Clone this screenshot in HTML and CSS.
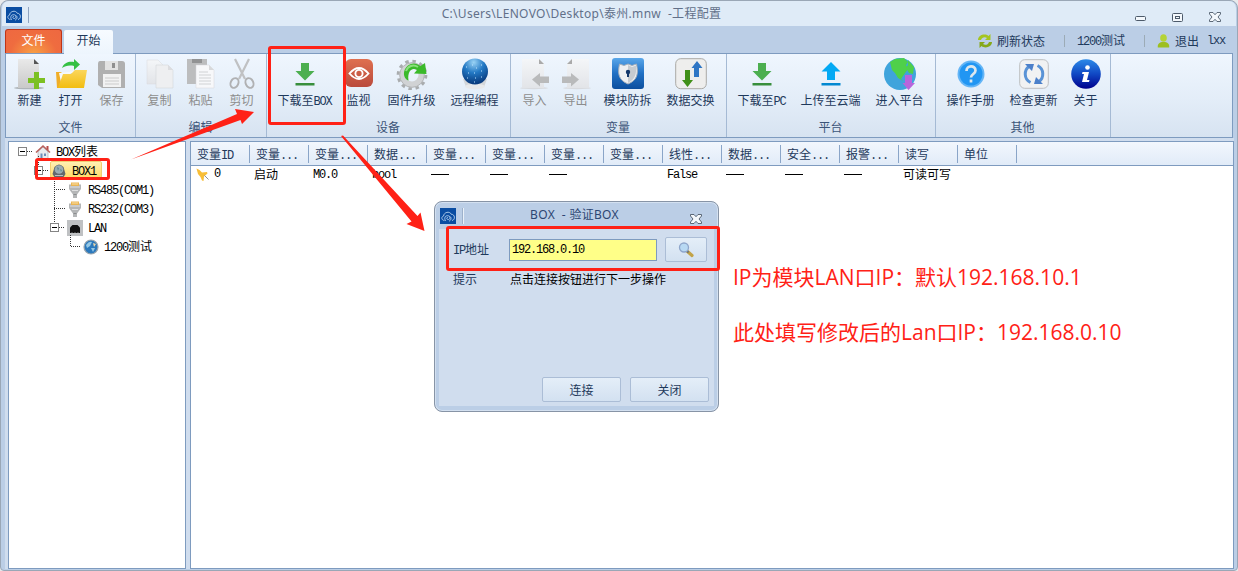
FILE: index.html
```html
<!DOCTYPE html>
<html lang="zh-CN">
<head>
  <meta charset="UTF-8">
  <title>工程配置</title>
  <meta name="viewport" content="width=device-width, initial-scale=1.0">
  <link rel="stylesheet" href="styles.css">
</head>
<body>
  <svg class="defs" width="0" height="0">
    <defs>
      <linearGradient id="gPage" x1="0" y1="0" x2="0" y2="1"><stop offset="0" stop-color="#e9e9e9"/><stop offset="1" stop-color="#c9c9c9"/></linearGradient>
      <linearGradient id="gPale" x1="0" y1="0" x2="0" y2="1"><stop offset="0" stop-color="#f4f6f8"/><stop offset="1" stop-color="#e2e4e8"/></linearGradient>
      <linearGradient id="gFolder" x1="0" y1="0" x2="0" y2="1"><stop offset="0" stop-color="#fbd65c"/><stop offset="1" stop-color="#f2bd10"/></linearGradient>
      <linearGradient id="gEye" x1="0" y1="0" x2="0" y2="1"><stop offset="0" stop-color="#df7050"/><stop offset="1" stop-color="#b94a3c"/></linearGradient>
      <linearGradient id="gShield" x1="0" y1="0" x2="0" y2="1"><stop offset="0" stop-color="#5aa7ea"/><stop offset=".5" stop-color="#2070c4"/><stop offset="1" stop-color="#0d4f9e"/></linearGradient>
      <linearGradient id="gInfo" x1="0" y1="0" x2="0" y2="1"><stop offset="0" stop-color="#2d8ae8"/><stop offset=".5" stop-color="#1048c4"/><stop offset="1" stop-color="#00008c"/></linearGradient>
      <radialGradient id="gGlobe" cx=".45" cy=".15" r=".8"><stop offset="0" stop-color="#9ad3f5"/><stop offset=".5" stop-color="#2278c4"/><stop offset="1" stop-color="#0a3d80"/></radialGradient>
      <symbol id="logo" viewBox="0 0 16 16">
        <rect width="16" height="16" fill="#0a4da2"/>
        <path d="M4.500 12.500C1.400 12.400.9 8.600 3.600 8c.2-3.800 6-5.300 7.700-1.700 3.700-.2 4.300 5.600.7 6.200M6 13c-2-1.500-1.600-5.300 1.600-5.300 2.600 0 3.200 3.300.9 3.800-2 .3-2.300-2.100-.6-2.200M9.500 8.300c2.200.7 2 4-.5 4.800" fill="none" stroke="#b9d2ee" stroke-width=".9"/>
      </symbol>
      <symbol id="closeX" viewBox="0 0 12 10">
        <path d="M.5.500h3.500L6 2.700 8 .5h3.500V2L9 5l2.500 3v1.500H8L6 7.300 4 9.500H.5V8L3 5 .5 2z" fill="#f4f8fc" stroke="#4d5a6a" stroke-width=".9"/>
      </symbol>
      <symbol id="down" viewBox="0 0 32 32">
        <path d="M12 5h8v8h5.500L16 22.500 6.500 13H12z" fill="#4caf50"/><rect x="6.500" y="25" width="19" height="2.500" fill="#388e3c"/>
      </symbol>
      <symbol id="serial" viewBox="0 0 16 16">
        <path d="M2 2.500h12V7l-2.500 3.500-1.500 2V16H6v-3.500l-1.500-2L2 7z" fill="#b4b6b7"/><path d="M4 .5h8V4H4z" fill="#e9b556"/><path d="M6 1v2M8 1v2M10 1v2" stroke="#fbe0a4"/><path d="M3 5h10M5 8.500h6" stroke="#dfe0e1"/><path d="M6.500 12.500h3" stroke="#8b8d8f"/>
      </symbol>
    </defs>
  </svg>

  <div class="window">
    <header class="titlebar">
      <svg class="logo"><use href="#logo"/></svg>
      <i class="grip"></i>
      <div class="title">C:\Users\LENOVO\Desktop\泰州.mnw&nbsp; -工程配置</div>
      <div class="controls">
        <svg width="11" height="6" viewBox="0 0 11 6"><rect x=".5" y=".5" width="10" height="4" rx="1" fill="#f4f8fc" stroke="#4d5a6a"/></svg>
        <svg width="11" height="9" viewBox="0 0 11 9"><rect x=".5" y=".5" width="10" height="8" rx="1" fill="#f4f8fc" stroke="#4d5a6a"/><rect x="3.500" y="3.500" width="4" height="2" fill="none" stroke="#4d5a6a"/></svg>
        <svg width="12" height="10"><use href="#closeX"/></svg>
      </div>
    </header>

    <nav class="tabs">
      <div class="tab file">文件</div>
      <div class="tab active">开始</div>
      <div class="account">
        <svg width="16" height="16" viewBox="0 0 16 16"><path d="M1 7C1 2 8 0 11.500 3L13.500 1v6H8l2-2C8 3.500 5 4 4 7z" fill="#a5c520"/><path d="M15 9c0 5-7 7-10.500 4L2.500 15V9H8l-2 2c2 1.500 5 1 6-2z" fill="#86a818"/></svg>
        <span class="refresh">刷新状态</span>
        <i class="sep"></i>
        <span class="station"><b class="en">1200</b>测试</span>
        <i class="sep"></i>
        <svg class="user" width="13" height="14" viewBox="0 0 13 14"><ellipse cx="6.500" cy="4" rx="3.300" ry="3.800" fill="#b5d336"/><path d="M.8 13.500c-.5-4 2-5 4-5.500h3.400c2 .5 4.500 1.500 4 5.500z" fill="#9dbf20"/></svg>
        <span class="logout">退出</span><span class="en">lxx</span>
      </div>
    </nav>

    <section class="ribbon">
      <div class="group">
        <div class="tools">
          <div class="tool w2">
            <svg viewBox="0 0 32 32"><ellipse cx="15" cy="30" rx="15" ry="1.300" fill="#aeb4b8"/><path d="M4 1h16l5 5v24H4z" fill="url(#gPage)"/><path d="M20 1v5h5z" fill="#555"/><path d="M20 14h5v6h6v5h-6v6h-5v-6h-6v-5h6z" fill="#7cc022"/></svg>
            <span>新建</span>
          </div>
          <div class="tool w2">
            <svg viewBox="0 0 32 32"><path d="M1 14h5l2 2h17v14H2z" fill="#f0ad27"/><path d="M4 15l18-2 1 9-16 7z" fill="#f6f9fb"/><path d="M8 18l3-1M13 17l4-1" stroke="#75aac5"/><path d="M3 30l5-14h8l4-4h12l-3 18z" fill="url(#gFolder)"/><path d="M7 10c2-6 8-7 12-6V1l6 5.500-6 5.500V8C14 7 10 8 7 10z" fill="#35c044"/></svg>
            <span>打开</span>
          </div>
          <div class="tool w2 off">
            <svg viewBox="0 0 32 32"><path d="M4 3h22q3 0 3 3v24H6l-4-3V6q0-3 2-3z" fill="#b0b0b0"/><path d="M9 3h13v9H9z" fill="#e2e2e2"/><path d="M16 5h3v5h-3z" fill="#8f8f8f"/><path d="M7 16h18v13H7z" fill="#f2f2f2"/><path d="M9 20h14M9 23h14M9 26h14" stroke="#ccc"/></svg>
            <span>保存</span>
          </div>
        </div>
        <div class="caption">文件</div>
      </div>

      <div class="group">
        <div class="tools">
          <div class="tool w2 off">
            <svg viewBox="0 0 32 32"><path d="M3 2h11l5 5v19H3z" fill="url(#gPale)" stroke="#d9dbde" stroke-width=".5"/><path d="M12 7h12l5 5v18H12z" fill="#eeeff1" stroke="#cfd1d4" stroke-width=".5"/><path d="M24 7v5h5z" fill="#dcdde0"/></svg>
            <span>复制</span>
          </div>
          <div class="tool w2 off">
            <svg viewBox="0 0 32 32"><path d="M2 1h20v25H2z" fill="#bcbdbe"/><path d="M7 1h10v4H7z" fill="#929394"/><path d="M11 7h13l5 5v18H11z" fill="#f7f8fa" stroke="#d4d6d8" stroke-width=".5"/><path d="M24 7v5h5z" fill="#d8d9db"/><path d="M14 14h9M14 17h12M14 20h12M14 23h12M14 26h12" stroke="#d0d2d4"/></svg>
            <span>粘贴</span>
          </div>
          <div class="tool w2 off">
            <svg viewBox="0 0 32 32"><path d="M9 1l10 20M23 1L13 21" stroke="#c0c1c3" stroke-width="2.200"/><ellipse cx="8.500" cy="25" rx="3.800" ry="5" transform="rotate(25 8.500 25)" fill="none" stroke="#b0b1b3" stroke-width="2"/><ellipse cx="23.500" cy="25" rx="3.800" ry="5" transform="rotate(-25 23.500 25)" fill="none" stroke="#b0b1b3" stroke-width="2"/></svg>
            <span>剪切</span>
          </div>
        </div>
        <div class="caption">编辑</div>
      </div>

      <div class="group">
        <div class="tools">
          <div class="tool wbox">
            <svg><use href="#down"/></svg>
            <span>下载至<b class="en">BOX</b></span>
          </div>
          <div class="tool w2">
            <svg viewBox="0 0 32 32"><rect x="2" y="1" width="28" height="28" rx="6" fill="url(#gEye)"/><path d="M6.500 15.500Q16 4.500 25.500 15.500 16 26.500 6.500 15.500z" fill="none" stroke="#fff" stroke-width="1.900"/><circle cx="16" cy="15.500" r="3.600" fill="none" stroke="#fff" stroke-width="1.900"/></svg>
            <span>监视</span>
          </div>
          <div class="tool w4">
            <svg viewBox="0 0 32 32"><circle cx="16" cy="17" r="13.600" fill="none" stroke="#a9acae" stroke-width="3.500" stroke-dasharray="3.400 3.721"/><circle cx="16" cy="17" r="9.500" fill="none" stroke="#d0d2d4" stroke-width="6"/><circle cx="16" cy="17" r="12.300" fill="none" stroke="#b4b6b8"/><path d="M12.500 22.500C5 20 7 6 18 5.500q3.500 0 6.500 2.500l4.500-3 1.500 11-12.500-.5 3-3.500c-4-3-10 0-8.500 10.500z" fill="#3aba2a"/><path d="M10 13c2-5 7-7 12-4" stroke="#8be07c" stroke-width="2" fill="none"/></svg>
            <span>固件升级</span>
          </div>
          <div class="tool w4">
            <svg viewBox="0 0 32 32"><path d="M4 21h24l-3 8H7z" fill="#d3d6d9"/><ellipse cx="16" cy="28.500" rx="10" ry="2.800" fill="#e7e9eb"/><circle cx="16" cy="13.500" r="13" fill="url(#gGlobe)"/><path d="M7 9h1m5-2h1m3 3h1m4-3h1m-14 8h1m5 0h1m6-2h1m-15 7h1m7 0h1m5-1h1m-8 5h1" stroke="#bfe4ff" stroke-width="1.100"/></svg>
            <span>远程编程</span>
          </div>
        </div>
        <div class="caption">设备</div>
      </div>

      <div class="group">
        <div class="tools">
          <div class="tool w2 off">
            <svg viewBox="0 0 32 32"><ellipse cx="15" cy="30" rx="14" ry="1.200" fill="#d8dade"/><path d="M3 1h17l5 5v24H3z" fill="url(#gPale)"/><path d="M20 1v5h5z" fill="#aaa"/><path d="M13 21.500l8-6.500v3.500h9v6.500h-9v3.500z" fill="#b9babb"/></svg>
            <span>导入</span>
          </div>
          <div class="tool w2 off">
            <svg viewBox="0 0 32 32"><ellipse cx="17" cy="30" rx="14" ry="1.200" fill="#d8dade"/><path d="M7 6l5-5h17v29H7z" fill="url(#gPale)"/><path d="M12 1v5H7z" fill="#aaa"/><path d="M19 21.500L11 15v3.500H2V25h9v3.500z" fill="#b9babb"/></svg>
            <span>导出</span>
          </div>
          <div class="tool w4">
            <svg viewBox="0 0 32 32"><rect width="32" height="31" rx="3" fill="url(#gShield)"/><path d="M16 6l4 1.500L24.500 6c2 10 1 16-8.500 20C6.500 22 5.500 16 7.500 6L12 7.500z" fill="#eef0f2" stroke="#a7b0ba"/><path d="M16 7v18c6-3 9-8 8-17.500L20 9z" fill="#c6cbd0"/><circle cx="16" cy="14" r="2.200" fill="#14386a"/><path d="M15 14h2v5h-2z" fill="#14386a"/></svg>
            <span>模块防拆</span>
          </div>
          <div class="tool w4">
            <svg viewBox="0 0 32 32"><rect x=".7" y=".7" width="30.600" height="30" rx="5" fill="#eeeeed" stroke="#aaa9a5"/><path d="M22 3l5.500 7H24v9h-5v-9h-2.500z" fill="#2f76c4"/><path d="M10 12h5v10h3l-5.500 7L7 22h3z" fill="#409018"/></svg>
            <span>数据交换</span>
          </div>
        </div>
        <div class="caption">变量</div>
      </div>

      <div class="group">
        <div class="tools">
          <div class="tool w4">
            <svg><use href="#down"/></svg>
            <span>下载至<b class="en">PC</b></span>
          </div>
          <div class="tool w5">
            <svg viewBox="0 0 32 32"><path d="M16 4l9.500 9.500H20V22h-8v-8.500H6.500z" fill="#03a9f4"/><rect x="6.500" y="25" width="19" height="2.500" fill="#0288d1"/></svg>
            <span>上传至云端</span>
          </div>
          <div class="tool w4">
            <svg viewBox="0 0 32 32"><circle cx="16" cy="16" r="16" fill="#3fa4dc"/><path d="M6 4l5-3 9-1 4 4-2 3 2 4-5 7-2 3 2 2-5-3-3-5-3-3z" fill="#4fd04a"/><path d="M24 2l6 7-1 7-4-1-3-5 2-3z" fill="#4fd04a"/><path d="M21 17h7v8h3l-6.500 7-6-7H21z" fill="#b765dc"/></svg>
            <span>进入平台</span>
          </div>
        </div>
        <div class="caption">平台</div>
      </div>

      <div class="group">
        <div class="tools">
          <div class="tool w4">
            <svg viewBox="0 0 32 32"><circle cx="16" cy="16" r="13.500" fill="#64b5f6"/><circle cx="16" cy="16" r="11.500" fill="#2196f3"/><path d="M11.500 13c0-6 9-6 9-.5 0 3.500-4.500 3.500-4.500 7M16 21.500v3" fill="none" stroke="#dce7ee" stroke-width="2.700"/></svg>
            <span>操作手册</span>
          </div>
          <div class="tool w4">
            <svg viewBox="0 0 32 32"><rect x="1.700" y="1.700" width="28.600" height="28.600" rx="5" fill="#f1f2f3" stroke="#bdbfc1"/><path d="M12.500 24.500C5.500 21 6 12 11 8.500M19.500 7.500c7 3.500 6.500 12.500 1.500 16" fill="none" stroke="#5a93d6" stroke-width="3"/><path d="M7 6h9l-2 7zM25 26h-9l2-7z" fill="#4c80ca"/></svg>
            <span>检查更新</span>
          </div>
          <div class="tool w2">
            <svg viewBox="0 0 32 32"><circle cx="16" cy="16" r="14.800" fill="url(#gInfo)"/><circle cx="17.500" cy="9.500" r="2.300" fill="#fff"/><path d="M12.500 14H19l-2 8h2.500l-.5 2h-7l2-8h-2z" fill="#fff"/></svg>
            <span>关于</span>
          </div>
        </div>
        <div class="caption">其他</div>
      </div>
    </section>

    <main class="workspace">
      <aside class="tree">
        <svg class="tree-lines" width="100" height="115" viewBox="0 0 100 115">
          <g fill="none" stroke="#333" stroke-dasharray="1 1">
            <path d="M19 10.500h6M35 29.500h6M30.500 15v10M46.500 38v44M46 48.500h11M46 67.500h11M51 86.500h5M62.500 94v11M63 105.500h10"/>
          </g>
          <g fill="#fff" stroke="#848484">
            <rect x="10.500" y="6.500" width="8" height="8"/><rect x="26.500" y="25.500" width="8" height="8"/><rect x="42.500" y="82.500" width="8" height="8"/>
          </g>
          <path d="M12 10.500h5M28 29.500h5M44 86.500h5" stroke="#000"/>
        </svg>
        <div class="node l0">
          <svg viewBox="0 0 16 16"><path d="M3 7.500L8 3l5 4.500V15H3z" fill="#e8eaed" stroke="#9aa3ac" stroke-width=".6"/><path d="M11.500 2h2v4h-2z" fill="#b94b48"/><path d="M1 8.500L8 2l7 6.500" fill="none" stroke="#b8605c" stroke-width="1.600"/><path d="M5.500 9.500h2V15h-2zM9 9.500h2V12H9z" fill="#6c8cb8"/></svg>
          <span><b class="en">BOX</b>列表</span>
        </div>
        <div class="node l1 selected">
          <svg viewBox="0 0 16 16"><path d="M1.500 11l2-7q4.500-5 9 0l2 7-2.500 4H4z" fill="#62686d"/><circle cx="8" cy="6.500" r="4.300" fill="#9aacb2"/><path d="M6 4l2 1-1 3zM9 6l2 1-1 2z" fill="#5f8a90"/><path d="M4 12.500h8" stroke="#b9bfc3"/></svg>
          <span><b class="en">BOX1</b></span>
        </div>
        <div class="node l2">
          <svg><use href="#serial"/></svg>
          <span><b class="en">RS485(COM1)</b></span>
        </div>
        <div class="node l2">
          <svg><use href="#serial"/></svg>
          <span><b class="en">RS232(COM3)</b></span>
        </div>
        <div class="node l2">
          <svg viewBox="0 0 16 16"><rect width="16" height="16" fill="#bfc1c3"/><path d="M3 13V7.500L5.500 5h5L13 7.500V13z" fill="#111"/><path d="M5 12v1M8 12v1M11 12v1" stroke="#777"/></svg>
          <span><b class="en">LAN</b></span>
        </div>
        <div class="node l3">
          <svg viewBox="0 0 16 16"><circle cx="8" cy="8" r="7" fill="#2b79bd" stroke="#9aa5ad" stroke-width="1.200"/><path d="M3 6q3-4 6-3L7 7l-3 2zM8 9l4 0-2 4z" fill="#95c8e5"/><path d="M10 4l3 1-2 3z" fill="#ebd6a7"/></svg>
          <span><b class="en">1200</b>测试</span>
        </div>
      </aside>

      <section class="grid">
        <div class="row head">
          <div>变量<b class="en">ID</b></div><div>变量<b class="en">...</b></div><div>变量<b class="en">...</b></div><div>数据<b class="en">...</b></div><div>变量<b class="en">...</b></div><div>变量<b class="en">...</b></div><div>变量<b class="en">...</b></div><div>变量<b class="en">...</b></div><div>线性<b class="en">...</b></div><div>数据<b class="en">...</b></div><div>安全<b class="en">...</b></div><div>报警<b class="en">...</b></div><div>读写</div><div>单位</div>
        </div>
        <div class="row data">
          <div class="id"><svg width="15" height="15" viewBox="0 0 15 15"><path d="M1.500 1.500l3 1.500L7 5.500l5-.5.500 1.500-3.500 3-.5 4.500L7 13.500 5.500 10 3 7z" fill="#f8be38"/><path d="M9.500 8.500l4 4" stroke="#8d9298"/></svg><b class="en">0</b></div>
          <div>启动</div><div><b class="en">M0.0</b></div><div><b class="en">bool</b></div><div><i class="dash"></i></div><div><i class="dash"></i></div><div><i class="dash"></i></div><div></div><div><b class="en">False</b></div><div><i class="dash"></i></div><div><i class="dash"></i></div><div><i class="dash"></i></div><div>可读可写</div><div></div>
        </div>
      </section>
    </main>
  </div>

  <div class="dialog">
    <div class="dialog-title">
      <svg class="logo"><use href="#logo"/></svg>
      <i class="grip"></i>
      <div class="title">BOX&nbsp; - 验证BOX</div>
      <svg class="close" width="12" height="10"><use href="#closeX"/></svg>
    </div>
    <div class="dialog-body">
      <div class="field">
        <label><b class="en">IP</b>地址</label>
        <div class="input"><b class="en">192.168.0.10</b></div>
        <div class="btn search"><svg width="16" height="16" viewBox="0 0 16 16"><path d="M9.500 9.500l4.500 4" stroke="#c2a348" stroke-width="3.200" stroke-linecap="round"/><path d="M8.500 8.500l2 2" stroke="#67707a" stroke-width="2"/><circle cx="6" cy="5.500" r="4.500" fill="#b8d9f3" stroke="#8fa6cb" stroke-width="1.300"/></svg></div>
      </div>
      <div class="hint"><label>提示</label><span>点击连接按钮进行下一步操作</span></div>
      <div class="actions">
        <div class="btn">连接</div>
        <div class="btn">关闭</div>
      </div>
    </div>
  </div>

  <!-- red marks and notes over the window -->
  <div class="mark mark-download"></div>
  <div class="mark mark-box"></div>
  <div class="mark mark-ip"></div>
  <svg class="arrows" width="1238" height="571" viewBox="0 0 1238 571">
    <path d="M131 159.500L237 114l-2-5 19 3-12 12-1.500-4z" fill="#ff2116"/>
    <path d="M341 136l2-.5L417.500 216l3-3.500 4 18.500-18-7 5-2.500z" fill="#ff2116"/>
  </svg>
  <div class="note note-default">IP为模块LAN口IP：默认192.168.10.1</div>
  <div class="note note-changed">此处填写修改后的Lan口IP：192.168.0.10</div>
</body>
</html>
```

FILE: styles.css
```css
* {
  box-sizing: border-box;
}

body {
  margin: 0;
  width: 1238px;
  height: 571px;
  position: relative;
  overflow: hidden;
  background: #e8eaec;
  font-family: "Noto Sans CJK SC", sans-serif;
  font-size: 12px;
  line-height: 14px;
  color: #1e395b;
  white-space: nowrap;
}

.defs {
  position: absolute;
}

/* half-width latin, 6px per character */
.en {
  font-family: "Liberation Mono", monospace;
  font-weight: normal;
  letter-spacing: -1.2px;
}

.window {
  display: flex;
  flex-direction: column;
  height: 571px;
  padding: 0 4px 1px;
  border: 1px solid #9aa7b6;
  border-radius: 8px 8px 4px 4px;
  background: #bbcee6;
}

.titlebar {
  display: flex;
  align-items: center;
  height: 25px;
  margin: 0 -3px;
  padding: 3px 15px 0 4px;
  border-radius: 7px 7px 0 0;
  background: #dfebf7;
}

.logo {
  width: 16px;
  height: 16px;
}

.grip {
  width: 1px;
  height: 16px;
  margin-left: 6px;
  background: #8ea4c1;
}

.title {
  flex: 1;
  text-align: center;
  font-family: "Noto Sans", "Noto Sans CJK SC", sans-serif;
  letter-spacing: .3px;
  color: #627089;
}

.titlebar .title {
  padding: 0 1px 3px 0;
}

.controls {
  display: flex;
  align-items: flex-end;
  gap: 26px;
  padding-top: 4px;
}

.tabs {
  display: flex;
  align-items: flex-end;
  height: 27px;
}

.tab {
  display: flex;
  justify-content: center;
  padding-top: 3px;
}

.tab.file {
  width: 57px;
  height: 24px;
  border: 1px solid #bf3417;
  border-bottom: 0;
  border-radius: 3px 3px 0 0;
  background: radial-gradient(ellipse at 50% 110%, #f9a345, #ef6c3f 60%, #ee6841);
  color: #fff;
}

.tab.active {
  width: 49px;
  height: 24px;
  margin: 0 0 -1px 2px;
  border-radius: 2px 2px 0 0;
  background: linear-gradient(#f7fbff, #edf5fd);
  z-index: 1;
}

.account {
  display: flex;
  align-items: center;
  height: 24px;
  margin-left: auto;
  padding-right: 8px;
}

.account .refresh {
  margin-left: 4px;
}

.sep {
  width: 1px;
  height: 12px;
  margin: 0 12px 0 19px;
  background: #9cabb6;
}

.account .user {
  margin-right: 5px;
}

.account .logout {
  margin-right: 8px;
}

.ribbon {
  display: flex;
  height: 85px;
  border: 1px solid #7e9bbf;
  background: linear-gradient(#eff6fe, #e3edf8 55%, #d7e3f1);
}

.group {
  display: flex;
  flex-direction: column;
  padding: 4px 4px 3px 3px;
  border-right: 1px solid #a5bad4;
}

.group:first-child {
  padding-right: 3px;
}

.tools {
  display: flex;
}

.tool {
  display: flex;
  flex-direction: column;
  align-items: center;
  gap: 3px;
}

.tool svg {
  width: 32px;
  height: 32px;
}

.tool span {
  height: 14px;
}

.w2 { width: 41px; }
.w4 { width: 63px; }
.w5 { width: 75px; }
.wbox { width: 69px; }

.wbox + .w2 {
  margin-left: -1px;
  margin-right: 1px;
}

.off {
  color: #8d8d8d;
}

.caption {
  margin-top: 13px;
  text-align: center;
  color: #3b5478;
}

.workspace {
  display: flex;
  flex: 1;
  gap: 4px;
  margin-right: -1px;
  padding: 3px 0 0 3px;
  background: #d0ddee;
  min-height: 0;
}

.tree {
  position: relative;
  width: 178px;
  border: 1px solid #7e9bbf;
  background: #fff;
  color: #000;
}

.tree-lines {
  position: absolute;
  left: -1px;
  top: -1px;
}

.node {
  display: flex;
  align-items: center;
  gap: 5px;
  height: 19px;
}

.node svg {
  width: 16px;
  height: 16px;
}

.l0 { margin-left: 26px; }
.l1 { margin-left: 41px; }
.l2 { margin-left: 58px; }
.l3 { margin-left: 74px; }

.selected {
  width: 52px;
  border: 1px solid #f0cf72;
  border-radius: 2px;
  background: linear-gradient(#fff0b4, #ffda60);
}

.grid {
  flex: 1;
  border: 1px solid #7e9bbf;
  background: #fff;
}

.row {
  display: grid;
  grid-template-columns: repeat(14, 59px);
}

.head {
  align-items: center;
  height: 24px;
  border-bottom: 1px solid #7e9bbf;
  background: linear-gradient(#f2f7fd, #e1ebf8);
}

.head div {
  height: 18px;
  padding: 2px 0 0 6px;
  border-right: 1px solid #8aa5c8;
}

.data {
  align-items: center;
  height: 16px;
  color: #000;
}

.data div {
  padding-left: 4px;
}

.data .id {
  display: flex;
  align-items: center;
  gap: 4px;
}

.dash {
  display: block;
  width: 18px;
  height: 1px;
  background: #000;
}

.dialog {
  position: absolute;
  left: 434px;
  top: 201px;
  width: 285px;
  height: 211px;
  padding: 0 4px 6px;
  border: 1px solid #8794a6;
  border-radius: 8px;
  background: #bbcee6;
  box-shadow: inset 0 0 0 1px #d3e0f0;
}

.dialog-title {
  display: flex;
  align-items: center;
  height: 27px;
  padding: 1px 12px 0 1px;
}

.dialog-title .title {
  padding: 0 5px 2px 0;
  color: #2d4673;
}

.dialog-title .close {
  margin-top: 6px;
}

.dialog-title .grip {
  background: #e9f1f9;
  border-left: 1px solid #9db1cb;
  width: 2px;
}

.dialog-body {
  display: flex;
  flex-direction: column;
  height: 177px;
  padding: 8px 5px 4px 14px;
  background: #d0ddee;
}

.field {
  display: flex;
  align-items: center;
}

.field label,
.hint label {
  width: 56px;
}

.input {
  width: 148px;
  height: 22px;
  padding: 1px 2px;
  border: 1px solid #7e9bbf;
  background: #ffff88;
  color: #000;
}

.btn {
  display: flex;
  align-items: center;
  justify-content: center;
  width: 79px;
  height: 25px;
  border: 1px solid #abbdd6;
  border-radius: 2px;
  background: linear-gradient(#e4eef8, #d3e1f1);
}

.search {
  width: 42px;
  margin-left: 8px;
}

.hint {
  display: flex;
  margin-top: 10px;
}

.hint span {
  margin-left: 1px;
  color: #000;
}

.actions {
  display: flex;
  justify-content: flex-end;
  gap: 9px;
  margin-top: auto;
}

.mark {
  position: absolute;
  border: 3px solid #ff2116;
  border-radius: 3px;
}

.mark-download {
  left: 268px;
  top: 46px;
  width: 78px;
  height: 79px;
}

.mark-box {
  left: 35px;
  top: 158px;
  width: 75px;
  height: 22px;
}

.mark-ip {
  left: 446px;
  top: 226px;
  width: 274px;
  height: 45px;
}

.arrows {
  position: absolute;
  left: 0;
  top: 0;
}

.note {
  position: absolute;
  left: 733px;
  font-family: "Open Sans", "Noto Sans CJK SC", sans-serif;
  font-size: 21px;
  line-height: 28px;
  color: #ff2116;
}

.note-default { top: 263px; }
.note-changed { top: 318px; }
```
